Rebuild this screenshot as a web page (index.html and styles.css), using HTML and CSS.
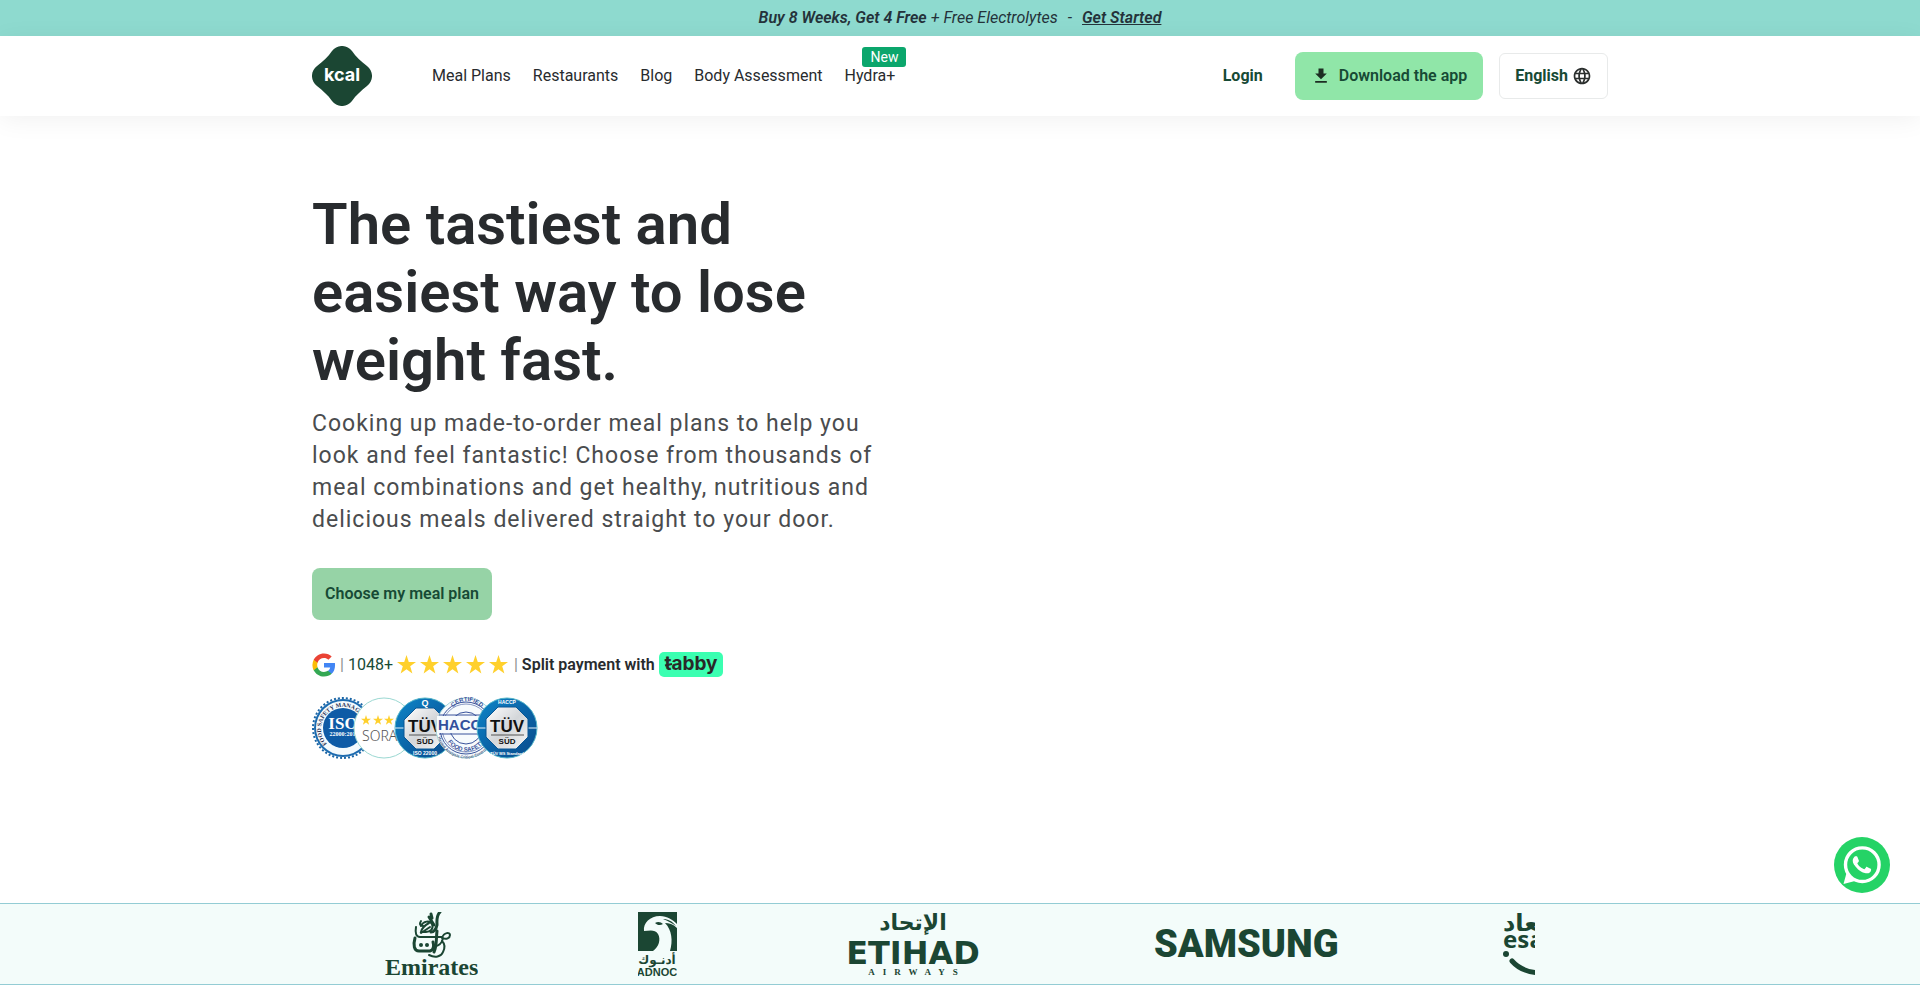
FILE: index.html
```html
<!DOCTYPE html>
<html lang="en">
<head>
<meta charset="utf-8">
<meta name="viewport" content="width=device-width, initial-scale=1">
<title>Kcal – Meal Plans</title>
<link rel="stylesheet" href="styles.css">
</head>
<body>
<svg class="defs" aria-hidden="true">
  <defs>
    <symbol id="star" viewBox="0 0 20 20"><path d="M10 0l2.4 7.3H20l-6.1 4.6 2.3 7.5L10 15l-6.2 4.4 2.3-7.5L0 7.3h7.6z" fill="#ffd02c"/></symbol>
    <linearGradient id="blue" x1="0" y1="0" x2="1" y2="1"><stop offset="0" stop-color="#0e87c9"/><stop offset=".5" stop-color="#0a64a8"/><stop offset="1" stop-color="#0a4c8c"/></linearGradient>
    <linearGradient id="steel" x1="0" y1="0" x2="1" y2="1"><stop offset="0" stop-color="#ffffff"/><stop offset=".5" stop-color="#d3d6d9"/><stop offset="1" stop-color="#f6f6f6"/></linearGradient>
  </defs>
</svg>

<aside class="promo"><strong>Buy 8 Weeks, Get 4 Free</strong><span>+ Free Electrolytes</span><span class="promo-dash">-</span><a href="#start">Get Started</a></aside>

<header class="header">
  <div class="container header-row">
    <a class="logo" href="#home" aria-label="kcal">
      <svg width="60" height="60" viewBox="0 0 60 60">
        <path d="M20 5C25-1.700 35-1.700 40 5C44 11 49 15 55 20C61.700 25 61.700 35 55 40C49 45 44 49 40 55C35 61.700 25 61.700 20 55C16 49 11 45 5 40C-1.700 35-1.700 25 5 20C11 15 16 11 20 5Z" fill="#1b4633"/>
        <text class="logo-text" x="30" y="35" text-anchor="middle">kcal</text>
      </svg>
    </a>
    <nav class="nav">
      <a href="#plans">Meal Plans</a>
      <a href="#restaurants">Restaurants</a>
      <a href="#blog">Blog</a>
      <a href="#body">Body Assessment</a>
      <a class="has-tag" href="#hydra">Hydra+<span class="tag">New</span></a>
    </nav>
    <div class="actions">
      <a class="login" href="#login">Login</a>
      <button class="btn btn-download" type="button">
        <svg width="20" height="20" viewBox="0 0 24 24" fill="#1c2d22"><path d="M19 9h-4V3H9v6H5l7 7 7-7zM5 18v2h14v-2H5z"/></svg>
        Download the app
      </button>
      <button class="btn btn-lang" type="button">English
        <svg width="20" height="20" viewBox="0 0 24 24" fill="#2b2f2e"><path d="M12 2C6.500 2 2 6.500 2 12s4.500 10 10 10 10-4.500 10-10S17.500 2 12 2zm6.900 6h-2.900a15.700 15.700 0 0 0-1.400-3.600A8 8 0 0 1 18.900 8zM12 4c.8 1.200 1.500 2.500 1.900 4h-3.800c.4-1.500 1.100-2.800 1.900-4zM4.300 14a8.200 8.200 0 0 1 0-4h3.300a16.500 16.500 0 0 0 0 4H4.300zm.8 2H8c.3 1.300.8 2.500 1.400 3.600A8 8 0 0 1 5.100 16zM8 8H5.100a8 8 0 0 1 4.300-3.600A15.700 15.700 0 0 0 8 8zm4 12c-.8-1.200-1.500-2.500-1.900-4h3.800c-.4 1.500-1.100 2.800-1.900 4zm2.300-6H9.700a14.700 14.700 0 0 1 0-4h4.600a14.700 14.700 0 0 1 0 4zm.3 5.600c.6-1.100 1.100-2.300 1.400-3.600h2.900a8 8 0 0 1-4.300 3.600zm1.800-5.600a16.500 16.500 0 0 0 0-4h3.300a8.200 8.200 0 0 1 0 4h-3.300z"/></svg>
      </button>
    </div>
  </div>
</header>

<main class="hero">
  <div class="container">
    <div class="hero-copy">
      <h1>The tastiest and easiest way to lose weight fast.</h1>
      <p>Cooking up made-to-order meal plans to help you look and feel fantastic! Choose from thousands of meal combinations and get healthy, nutritious and delicious meals delivered straight to your door.</p>
      <button class="btn btn-plan" type="button">Choose my meal plan</button>
      <div class="proof">
        <svg class="google" width="24" height="24" viewBox="0 0 48 48" role="img" aria-label="Google">
          <path fill="#4285f4" d="M46.100 24.500c0-1.600-.1-3.100-.4-4.500H24v8.900h12.400c-.5 2.900-2.200 5.300-4.600 7v5.800h7.500c4.300-4 6.800-9.900 6.800-17.200z"/>
          <path fill="#34a853" d="M24 47c6.200 0 11.400-2.100 15.300-5.600l-7.500-5.800c-2.100 1.400-4.700 2.200-7.800 2.200-6 0-11.100-4-12.900-9.500H3.400v6C7.200 41.900 15 47 24 47z"/>
          <path fill="#fbbc05" d="M11.100 28.300a13.700 13.700 0 0 1 0-8.700v-6H3.400a23 23 0 0 0 0 20.700l7.700-6z"/>
          <path fill="#ea4335" d="M24 10.200c3.400 0 6.400 1.200 8.800 3.400l6.600-6.600C35.400 3.300 30.200 1 24 1 15 1 7.200 6.200 3.400 13.700l7.700 6c1.800-5.500 6.900-9.500 12.900-9.500z"/>
        </svg>
        <span class="bar">|</span>
        <span class="count">1048+</span>
        <span class="stars" role="img" aria-label="5 stars">
          <svg width="19" height="19"><use href="#star"/></svg>
          <svg width="19" height="19"><use href="#star"/></svg>
          <svg width="19" height="19"><use href="#star"/></svg>
          <svg width="19" height="19"><use href="#star"/></svg>
          <svg width="19" height="19"><use href="#star"/></svg>
        </span>
        <span class="bar">|</span>
        <strong class="split">Split payment with</strong>
        <svg class="tabby" width="64" height="25" viewBox="0 0 64 25">
          <rect width="64" height="25" rx="5" fill="#3bffb1"/>
          <text class="tabby-text" x="32" y="18" text-anchor="middle">tabby</text>
          <path d="M6 13.500l7-1.500" stroke="#292929" stroke-width="2"/>
        </svg>
      </div>
      <ul class="badges">
        <li>
          <svg width="62" height="62" viewBox="0 0 62 62">
            <circle cx="31" cy="31" r="29" fill="#1c6bb0"/>
            <circle cx="31" cy="31" r="30" fill="none" stroke="#1b66a6" stroke-width="2" stroke-dasharray="2 2"/>
            <circle cx="31" cy="31" r="27" fill="#f4fafd"/>
            <circle cx="31" cy="31" r="20" fill="#0e5ba6"/>
            <path id="arc-iso" d="M15 47A22 22 0 1 1 47 47" fill="none"/>
            <text class="b-serif ring-dark"><textPath href="#arc-iso">FOOD SAFETY MANAGEMENT</textPath></text>
            <text class="b-serif iso" x="31" y="32" text-anchor="middle">ISO</text>
            <text class="b-serif iso-sub" x="32" y="39" text-anchor="middle">22000:2018</text>
          </svg>
        </li>
        <li>
          <svg width="62" height="62" viewBox="0 0 62 62">
            <circle cx="31" cy="31" r="30" fill="#fff" stroke="#9bd8d2"/>
            <use href="#star" x="8" y="18" width="10" height="10"/><use href="#star" x="20" y="18" width="10" height="10"/><use href="#star" x="31" y="18" width="10" height="10"/><use href="#star" x="42" y="18" width="10" height="10"/>
            <text class="sora" x="9" y="44">SORA</text>
          </svg>
        </li>
        <li>
          <svg width="62" height="62" viewBox="0 0 62 62">
            <circle cx="31" cy="31" r="30" fill="url(#blue)" stroke="#54b5c9"/>
            <path d="M1 31h60" stroke="#e7f3fa"/>
            <path d="M22 11h18l12 12v17L40 52H22L10 40V23z" fill="url(#steel)" stroke="#0a5694"/>
            <text class="b-sans tuv" x="31" y="35" text-anchor="middle">TÜV</text>
            <path d="M15 38h33" stroke="#555"/>
            <text class="b-sans sud" x="31" y="47" text-anchor="middle">SÜD</text>
            <text class="b-sans q" x="31" y="9" text-anchor="middle">Q</text>
            <text class="b-sans foot" x="31" y="58" text-anchor="middle">ISO 22000</text>
          </svg>
        </li>
        <li>
          <svg width="62" height="62" viewBox="0 0 62 62">
            <circle cx="31" cy="31" r="30" fill="#f7fbfd" stroke="#a5d5da"/>
            <circle cx="31" cy="31" r="26" fill="none" stroke="#39539b"/>
            <circle cx="31" cy="31" r="24" fill="none" stroke="#39539b" stroke-width=".6"/>
            <circle cx="31" cy="31" r="16" fill="none" stroke="#39539b"/>
            <rect x="2" y="19" width="58" height="17" fill="#f7fbfd"/>
            <path d="M4 18h54M4 37h54" stroke="#39539b"/>
            <text class="b-sans haccp" x="3" y="33">HACCP</text>
            <path id="arc-cert" d="M14 22A18 18 0 0 1 50 22" fill="none"/>
            <text class="b-sans ring-blue"><textPath href="#arc-cert" startOffset="50%" text-anchor="middle">CERTIFIED</textPath></text>
            <path id="arc-food" d="M10 39A22 22 0 0 0 52 39" fill="none"/>
            <text class="b-sans ring-blue"><textPath href="#arc-food" startOffset="50%" text-anchor="middle">FOOD SAFETY</textPath></text>
            <path id="arc-haz" d="M3 40A29 29 0 0 0 59 40" fill="none"/>
            <text class="b-sans ring-tiny"><textPath href="#arc-haz">Hazard Analysis Critical Control Points</textPath></text>
          </svg>
        </li>
        <li>
          <svg width="62" height="62" viewBox="0 0 62 62">
            <circle cx="31" cy="31" r="30" fill="url(#blue)" stroke="#54b5c9"/>
            <path d="M1 31h60" stroke="#e7f3fa"/>
            <path d="M22 10h18l12 12v18L40 52H22L10 40V22z" fill="url(#steel)" stroke="#0a5694"/>
            <text class="b-sans tuv" x="31" y="35" text-anchor="middle">TÜV</text>
            <path d="M15 38h33" stroke="#555"/>
            <text class="b-sans sud" x="31" y="47" text-anchor="middle">SÜD</text>
            <text class="b-sans foot" x="31" y="7" text-anchor="middle">HACCP</text>
            <text class="b-sans foot-sm" x="31" y="58" text-anchor="middle">TÜV MS Standard</text>
          </svg>
        </li>
      </ul>
    </div>
  </div>
</main>

<section class="partners" aria-label="Partners">
  <div class="track">
    <svg width="93" height="64" viewBox="0 0 93 64" role="img" aria-label="Emirates">
      <g fill="none" stroke="#1b4633" stroke-linecap="round" stroke-width="2">
        <path d="M55 0c-4 4-3 9-3 13-1 5-3 7-6 7" stroke-width="3"/>
        <path d="M46 2l1 4M44 5l5 8" stroke-width="3"/>
        <path d="M36 14c2-5 9-6 11-2 2 5-2 8-6 8h-5c1-4 4-7 8-9M36 9c-2 3-1 5 2 5"/>
        <path d="M31 15c-1 6 0 10 4 10h22M36 21l9-6"/>
        <path d="M57 26c2-6 8-6 8-3s-4 5-7 3c-1 6-5 8-8 8"/>
        <path d="M30 26c-2 7-1 13 4 13h11c4-1 4-6 3-9" stroke-width="3"/>
        <path d="M44 43c6 3 12 2 14-3 2-4 2-8-1-11"/>
        <path d="M52 19c-1 8 0 15-3 21" stroke-width="3"/>
      </g>
      <g fill="#1b4633"><circle cx="36" cy="33" r="2"/><circle cx="42" cy="33" r="2"/></g>
      <text class="emirates" x="0" y="63">Emirates</text>
    </svg>
    <svg width="39" height="64" viewBox="0 0 39 64" role="img" aria-label="ADNOC">
      <path d="M0 0h39v39H0z" fill="#1b4633"/>
      <path d="M6 19C5 11 12 4 22 4c7 0 13 4 17 8v4c-4-4-8-5-12-5 7 7 8 18 5 28H15c6-4 8-12 5-17-3-5-9-3-14-3z" fill="#f3fcfa"/>
      <path d="M17 11c3-2 6-1 8 1-3 2-6 1-8-1zM25 7c5 0 9 2 13 7-4-3-8-5-13-7z" fill="#1b4633"/>
      <text class="adnoc-ar" x="19" y="52" text-anchor="middle">أدنـوك</text>
      <text class="adnoc" x="19" y="64" text-anchor="middle">ADNOC</text>
    </svg>
    <svg width="153" height="64" viewBox="0 0 153 64" role="img" aria-label="Etihad Airways">
      <text class="etihad-ar" x="76" y="18" text-anchor="middle">الإتحاد</text>
      <text class="etihad" x="76" y="52" text-anchor="middle">ETIHAD</text>
      <text class="airways" x="80" y="63" text-anchor="middle">AIRWAYS</text>
    </svg>
    <svg width="193" height="64" viewBox="0 0 193 64" role="img" aria-label="Samsung">
      <text class="samsung" x="4" y="45">SAMSUNG</text>
    </svg>
    <svg width="90" height="64" viewBox="0 0 90 64" role="img" aria-label="Esaad">
      <text class="esaad-ar" x="0" y="19">إسعاد</text>
      <text class="esaad" x="0" y="36">esaad</text>
      <circle cx="3" cy="42" r="3" fill="#1b4633"/>
      <path d="M9 49c14 16 46 16 62-1" fill="none" stroke="#1b4633" stroke-width="5" stroke-linecap="round"/>
    </svg>
  </div>
</section>

<a class="whatsapp" href="#chat" aria-label="Chat on WhatsApp">
  <svg width="56" height="56" viewBox="0 0 56 56">
    <circle cx="28" cy="28" r="28" fill="#25d366"/>
    <path d="M9.500 47l3-11 8.500 8z" fill="#fff"/>
    <circle cx="28.300" cy="27.700" r="16.800" fill="#25d366" stroke="#fff" stroke-width="3.400"/>
    <path transform="translate(9.600 9.600) scale(1.520)" fill="#fff" d="M17.472 14.382c-.297-.149-1.758-.867-2.030-.967-.273-.099-.471-.148-.670.150-.197.297-.767.966-.940 1.164-.173.199-.347.223-.644.075-.297-.150-1.255-.463-2.390-1.475-.883-.788-1.480-1.761-1.653-2.059-.173-.297-.018-.458.130-.606.134-.133.298-.347.446-.520.149-.174.198-.298.298-.497.099-.198.050-.371-.025-.520-.075-.149-.669-1.612-.916-2.207-.242-.579-.487-.500-.669-.510-.173-.008-.371-.010-.570-.010-.198 0-.520.074-.792.372-.272.297-1.040 1.016-1.040 2.479 0 1.462 1.065 2.875 1.213 3.074.149.198 2.096 3.200 5.077 4.487.709.306 1.262.489 1.694.625.712.227 1.360.195 1.871.118.571-.085 1.758-.719 2.006-1.413.248-.694.248-1.289.173-1.413-.074-.124-.272-.198-.570-.347"/>
  </svg>
</a>
</body>
</html>
```
FILE: styles.css
```css
* {
  box-sizing: border-box;
}

body {
  margin: 0;
  background: #fff;
  color: #282b2e;
  font-family: Roboto, "Noto Sans", sans-serif;
  font-size: 16px;
  line-height: 24px;
}

a {
  color: inherit;
  text-decoration: none;
}

svg {
  display: block;
  flex: none;
}

.defs {
  position: absolute;
  width: 0;
  height: 0;
}

.container {
  max-width: 1344px;
  margin: 0 auto;
  padding: 0 24px;
}

/* Promo bar */
.promo {
  display: flex;
  justify-content: center;
  align-items: center;
  gap: 4px;
  height: 36px;
  background: #8edacf;
  font-style: italic;
  color: #24323a;
}

.promo strong,
.promo a {
  font-weight: 600;
}

.promo-dash {
  padding: 0 6px;
}

.promo a {
  text-decoration: underline;
}

/* Header */
.header {
  background: #fff;
  box-shadow: 0 4px 24px rgba(0, 0, 0, 0.06);
}

.header-row {
  display: flex;
  align-items: center;
  height: 80px;
}

.logo {
  margin-right: 60px;
}

.logo-text {
  fill: #fff;
  font: 700 18px Inter, sans-serif;
}

.nav {
  display: flex;
  gap: 22px;
}

.has-tag {
  position: relative;
}

.tag {
  position: absolute;
  left: 18px;
  bottom: 21px;
  padding: 0 8px;
  border-radius: 3px;
  background: #0ba66c;
  color: #fff;
  font-size: 14px;
  line-height: 20px;
}

.actions {
  display: flex;
  align-items: center;
  gap: 16px;
  margin-left: auto;
}

.login {
  margin-right: 16px;
  color: #174a35;
  font-weight: 700;
}

.btn {
  display: flex;
  align-items: center;
  border: 0;
  border-radius: 8px;
  color: #174a35;
  font: inherit;
  font-weight: 600;
  cursor: pointer;
}

.btn-download {
  gap: 8px;
  height: 48px;
  padding: 0 16px;
  background: #90e6a8;
}

.btn-lang {
  gap: 4px;
  height: 46px;
  padding: 0 15px;
  border: 1px solid #e8eaea;
  border-radius: 6px;
  background: #fff;
  font-weight: 700;
}

/* Hero */
.hero {
  min-height: 787px;
  padding-top: 74px;
}

.hero-copy {
  max-width: 576px;
}

h1 {
  margin: 0 0 14px;
  font-size: 58px;
  font-weight: 600;
  line-height: 68px;
}

.hero-copy p {
  margin: 0 0 32px;
  color: #4a4c4e;
  font-size: 23px;
  line-height: 32px;
  letter-spacing: 1px;
}

.btn-plan {
  height: 52px;
  padding: 0 13px;
  background: #96d3a6;
}

.proof {
  display: flex;
  align-items: center;
  gap: 4px;
  margin: 32px 0 20px;
  height: 25px;
}

.bar {
  color: #8b8f8e;
}

.count {
  color: #174a35;
}

.stars {
  display: flex;
  gap: 4px;
  margin-right: 2px;
}

.split {
  font-weight: 600;
}

.tabby-text {
  fill: #292929;
  font: 700 19px Inter, sans-serif;
}

.badges {
  display: flex;
  margin: 0;
  padding: 0;
  list-style: none;
}

.badges li + li {
  margin-left: -21px;
}

.b-serif {
  font-family: "Liberation Serif", serif;
  font-weight: 700;
}

.b-sans {
  font-family: "Liberation Sans", sans-serif;
  font-weight: 700;
}

.ring-dark {
  fill: #1d2c50;
  font-size: 6px;
}

.iso {
  fill: #fff;
  font-size: 17px;
}

.iso-sub {
  fill: #fff;
  font-size: 6px;
}

.sora {
  fill: #555;
  font: 300 14px "Noto Sans", sans-serif;
}

.tuv {
  fill: #111;
  font-size: 17px;
}

.sud {
  fill: #111;
  font-size: 8px;
}

.q {
  fill: #fff;
  font-size: 9px;
}

.foot {
  fill: #fff;
  font-size: 5px;
}

.foot-sm {
  fill: #fff;
  font-size: 4px;
}

.haccp {
  fill: #33509c;
  font-size: 15px;
}

.ring-blue {
  fill: #39539b;
  font-size: 6px;
}

.ring-tiny {
  fill: #4d5f88;
  font-size: 4px;
}

/* Partners */
.partners {
  padding: 8px 24px;
  border: solid #93ccd4;
  border-width: 1px 0;
  background: #f3fcfa;
}

.track {
  display: flex;
  gap: 160px;
  max-width: 1150px;
  margin: 0 auto;
  overflow: hidden;
}

.track text {
  fill: #1b4633;
}

.emirates {
  font: 700 24px "Liberation Serif", serif;
}

.adnoc-ar {
  font: 700 12px "DejaVu Sans", sans-serif;
}

.adnoc {
  font: 700 11px "Liberation Sans", sans-serif;
}

.etihad-ar {
  font: 700 22px "DejaVu Sans", sans-serif;
}

.etihad {
  font: 700 32px "DejaVu Sans", sans-serif;
}

.airways {
  font: 700 9px "Liberation Serif", serif;
  letter-spacing: 8px;
}

.samsung {
  font: 900 38px Roboto, sans-serif;
}

.esaad-ar {
  font: 700 24px "DejaVu Sans", sans-serif;
}

.esaad {
  font: 700 24px "Noto Sans", sans-serif;
}

.whatsapp {
  position: fixed;
  right: 30px;
  bottom: 100px;
}
```
